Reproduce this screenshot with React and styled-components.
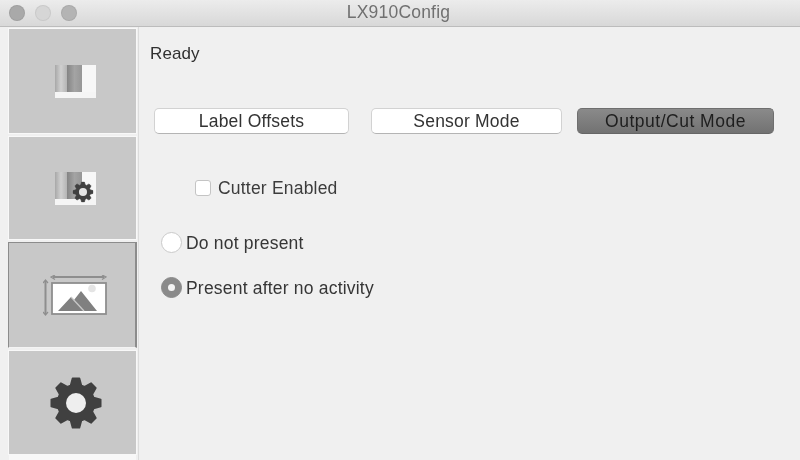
import React from 'react'
import styled, { createGlobalStyle } from 'styled-components'

const Global = createGlobalStyle`
  html, body { margin: 0; padding: 0; background: #f0f0f0; }
  body { font-family: "Liberation Sans", Arial, sans-serif; }
`

const Window = styled.div`
  width: 800px;
  height: 460px;
  overflow: hidden;
  display: flex;
  flex-direction: column;
  background: #f0f0f0;
  filter: blur(0.45px);
`

const TitleBar = styled.div`
  height: 27px;
  flex: none;
  display: grid;
  grid-template-columns: 1fr auto 1fr;
  align-items: center;
  box-sizing: border-box;
  border-bottom: 1px solid #bcbcbc;
  background: linear-gradient(#ececec, #d8d8d8);
`

const Lights = styled.div`
  display: flex;
  gap: 10px;
  padding-left: 9px;
`

const Light = styled.span`
  width: 16px;
  height: 16px;
  border-radius: 50%;
  background: ${p => p.$color};
  border: 1px solid rgba(0, 0, 0, 0.06);
  box-sizing: border-box;
`

const Title = styled.div`
  font-size: 17.5px;
  letter-spacing: 0.2px;
  color: #707070;
  padding: 0 3px 1px 0;
`

const Body = styled.div`
  flex: 1;
  display: flex;
  min-height: 0;
`

const Sidebar = styled.div`
  width: 139px;
  flex: none;
  box-sizing: border-box;
  padding: 1px 0 0 8px;
  border-right: 1px solid #dcdcdc;
  display: flex;
  flex-direction: column;
  gap: 2px;
`

const Tab = styled.div`
  height: ${p => p.$h}px;
  width: 129px;
  box-sizing: border-box;
  flex: none;
  padding-left: 6px;
  background: #c8c8c8;
  display: flex;
  align-items: center;
  justify-content: center;
  border: 1px solid ${p => (p.$active ? '#8c8c8c' : '#f8f8f8')};
  border-right-width: ${p => (p.$active ? 2 : 1)}px;
  border-bottom-color: ${p => (p.$active ? '#f4f4f4' : '#f8f8f8')};
`

const TabFoot = styled.div`
  flex: 1;
  width: 127px;
  margin: -2px 0 0 1px;
  background: #f8f8f8;
`

const Content = styled.div`
  flex: 1;
  padding: 18px 0 0 11px;
  color: #2e2e2e;
`

const Status = styled.div`
  font-size: 17px;
  letter-spacing: 0.1px;
  line-height: 18px;
  color: #303030;
`

const ButtonRow = styled.div`
  display: flex;
  margin: 45px 0 0 4px;
`

const ModeButton = styled.button`
  width: ${p => p.$w}px;
  height: 26px;
  margin-right: ${p => p.$gap}px;
  padding: 0;
  box-sizing: border-box;
  border-radius: 5px;
  font: 17.5px "Liberation Sans", Arial, sans-serif;
  letter-spacing: ${p => (p.$active ? 0.5 : 0.2)}px;
  color: ${p => (p.$active ? '#1e1e1e' : '#333')};
  border: 1px solid ${p => (p.$active ? '#6f6f6f' : '#d2d2d2')};
  border-bottom-color: ${p => (p.$active ? '#666' : '#b4b4b4')};
  background: ${p => (p.$active ? 'linear-gradient(#8a8a8a, #727272)' : '#fff')};
`

const CheckRow = styled.label`
  display: flex;
  align-items: center;
  gap: 7px;
  margin: 45px 0 0 45px;
  font-size: 17.5px;
  letter-spacing: 0.2px;
  line-height: 18px;
  color: #3c3c3c;
`

const CheckBox = styled.span`
  width: 16px;
  height: 16px;
  box-sizing: border-box;
  border-radius: 3px;
  background: #fff;
  border: 1px solid #c4c4c4;
`

const RadioRow = styled.label`
  display: flex;
  align-items: center;
  gap: 4px;
  margin: ${p => p.$top}px 0 0 11px;
  font-size: 17.5px;
  letter-spacing: 0.2px;
  line-height: 20px;
  color: #363636;
`

const Radio = styled.span`
  width: 21px;
  height: 21px;
  box-sizing: border-box;
  border-radius: 50%;
  display: flex;
  align-items: center;
  justify-content: center;
  background: ${p => (p.$on ? '#8a8a8a' : '#fff')};
  border: 1px solid ${p => (p.$on ? '#8a8a8a' : '#cacaca')};
`

const RadioDot = styled.span`
  width: 7px;
  height: 7px;
  border-radius: 50%;
  background: #f4f4f4;
`

// eight blunt teeth round a 52 unit box
const cogPath = () => {
  const c = 26
  const pt = (r, a) => `${(c + r * Math.cos(a)).toFixed(2)} ${(c + r * Math.sin(a)).toFixed(2)}`
  let d = ''
  for (let i = 0; i < 8; i++) {
    const a = (i * Math.PI) / 4 - Math.PI / 2
    const parts = [pt(18.5, a - 0.3), pt(25, a - 0.14), pt(25, a + 0.14), pt(18.5, a + 0.3)]
    d += (i === 0 ? 'M' : 'L') + parts.join('L')
  }
  return d + 'Z'
}

const Cog = ({ x = 0, y = 0, size = 52, hole = '#f0f0f0' }) => (
  <svg x={x} y={y} width={size} height={size} viewBox="0 0 52 52">
    <path d={cogPath()} fill="#404040" stroke="#404040" strokeWidth="1.5" strokeLinejoin="round" />
    <circle cx="26" cy="26" r="10" fill={hole} />
  </svg>
)

const Rolls = ({ gear }) => {
  const a = gear ? 'rollA2' : 'rollA'
  const b = gear ? 'rollB2' : 'rollB'
  return (
    <svg width="41" height="33" viewBox="0 0 41 33">
      <defs>
        <linearGradient id={a} x1="0" x2="1" y1="0" y2="0">
          <stop offset="0" stopColor="#a8a8a8" />
          <stop offset="0.5" stopColor="#d0d0d0" />
          <stop offset="1" stopColor="#b4b4b4" />
        </linearGradient>
        <linearGradient id={b} x1="0" x2="1" y1="0" y2="0">
          <stop offset="0" stopColor="#848484" />
          <stop offset="0.5" stopColor="#a4a4a4" />
          <stop offset="1" stopColor="#969696" />
        </linearGradient>
      </defs>
      <rect x="0" y="0" width="12" height="27" fill={`url(#${a})`} />
      <rect x="12" y="0" width="15" height="27" fill={`url(#${b})`} />
      <rect x="27" y="0" width="14" height="27" fill="#f7f7f7" />
      <rect x="0" y="27" width="41" height="6" fill="#f5f5f5" />
      {gear && <Cog x={17.5} y={9.5} size={21} hole="#e4e4e4" />}
    </svg>
  )
}

const Landscape = () => (
  <svg width="64" height="41" viewBox="0 0 64 41">
    <g stroke="#8e8e8e" fill="none" strokeWidth="2">
      <path d="M10 2h51" />
      <path d="M12 0 8 2l4 2.500M59 0l4 2L59 4.500" strokeWidth="1.2" />
      <path d="M2.500 6v33" />
      <path d="M0 8l2.500-3L5 8M0 37l2.500 3L5 37" strokeWidth="1.2" />
    </g>
    <rect x="9" y="8" width="54" height="31" fill="#fff" stroke="#8e8e8e" strokeWidth="1.8" />
    <circle cx="49" cy="13.500" r="3.800" fill="#e4e4e4" />
    <path d="M15 36 28 22l3 3 7-9 16 20z" fill="#808080" />
    <path d="M28 22l13 14" stroke="#c8c8c8" strokeWidth="1.3" />
  </svg>
)

const App = () => {
  return (
    <Window>
      <Global />
      <TitleBar>
        <Lights>
          <Light $color="#a9a9a9" />
          <Light $color="#d6d6d6" />
          <Light $color="#b4b4b4" />
        </Lights>
        <Title>LX910Config</Title>
      </TitleBar>
      <Body>
        <Sidebar>
          <Tab $h={106}><Rolls /></Tab>
          <Tab $h={104}><Rolls gear /></Tab>
          <Tab $h={106} $active><Landscape /></Tab>
          <Tab $h={105}>
            <svg width="52" height="52" viewBox="0 0 52 52"><Cog hole="#eeeeee" /></svg>
          </Tab>
          <TabFoot />
        </Sidebar>
        <Content>
          <Status>Ready</Status>
          <ButtonRow>
            <ModeButton $w={195} $gap={22}>Label Offsets</ModeButton>
            <ModeButton $w={191} $gap={15}>Sensor Mode</ModeButton>
            <ModeButton $w={197} $gap={0} $active>Output/Cut Mode</ModeButton>
          </ButtonRow>
          <CheckRow><CheckBox />Cutter Enabled</CheckRow>
          <RadioRow $top={35}><Radio />Do not present</RadioRow>
          <RadioRow $top={24}><Radio $on><RadioDot /></Radio>Present after no activity</RadioRow>
        </Content>
      </Body>
    </Window>
  )
}

export default App
